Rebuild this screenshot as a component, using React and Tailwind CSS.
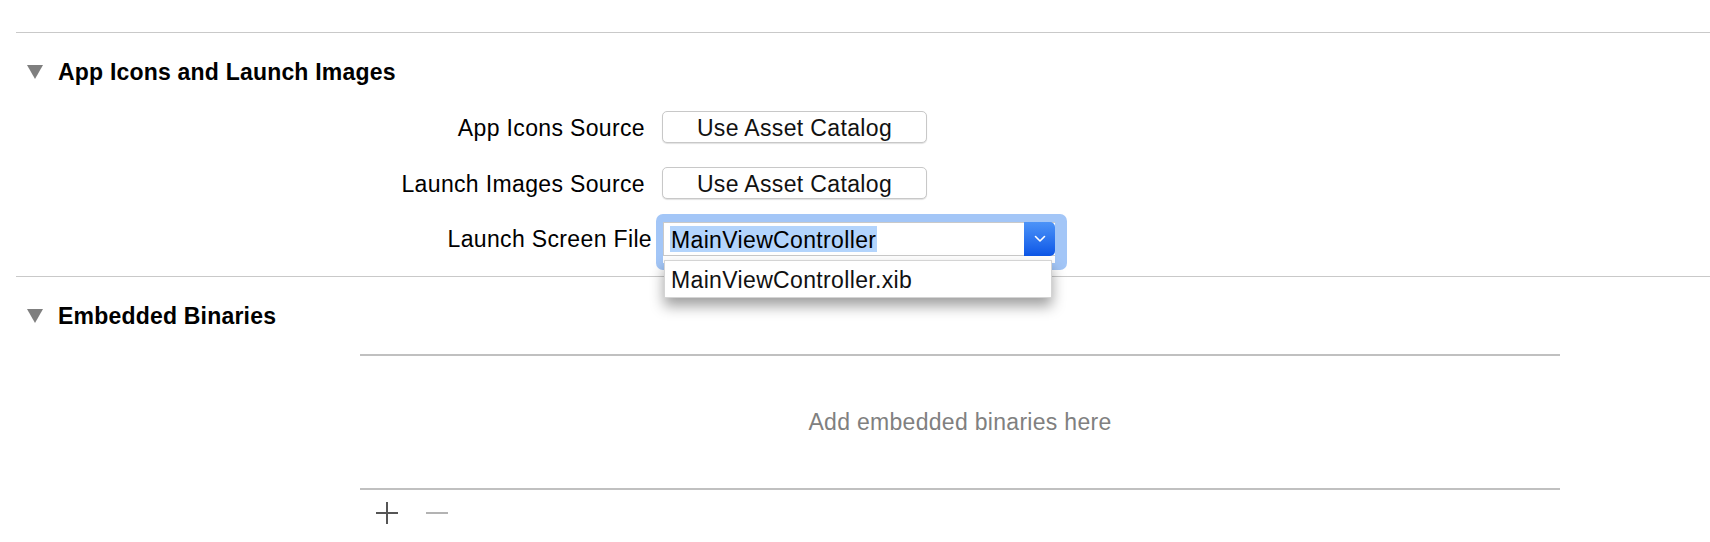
import React from "react";

function Disclosure() {
  return (
    <svg width="16" height="14" viewBox="0 0 16 14" className="shrink-0">
      <polygon points="0,0 16,0 8,14" fill="#7f7f7f" />
    </svg>
  );
}

function SectionHeader({ title }) {
  return (
    <div className="flex items-center h-[24px] mt-[27px] pl-[27px] gap-[15px]">
      <Disclosure />
      <span className="text-[23px] leading-[24px] font-bold tracking-[0.2px] text-black">{title}</span>
    </div>
  );
}

function Chevron() {
  return (
    <svg width="12" height="8" viewBox="0 0 12 8">
      <polyline points="1.5,1.5 6,6 10.5,1.5" fill="none" stroke="#ffffff" strokeWidth="1.6" strokeLinecap="round" strokeLinejoin="round" />
    </svg>
  );
}

function ButtonRow({ label, mt }) {
  return (
    <div className={`flex ${mt}`}>
      <div className="w-[645px] text-right h-[32px] leading-[34px] text-[23px] tracking-[0.35px] text-black">{label}</div>
      <div className="ml-[17px] w-[265px] h-[32px] rounded-[5px] border border-[#c8c8c8] bg-white shadow-[0_1px_1px_rgba(0,0,0,0.12)] text-center leading-[32px] text-[23px] tracking-[0.35px] text-[#111]">
        Use Asset Catalog
      </div>
    </div>
  );
}

export default function App() {
  return (
    <div className="w-[1710px] h-[542px] bg-white overflow-hidden" style={{ fontFamily: '"Liberation Sans", Arial, sans-serif' }}>
      <div className="h-[32px]" />
      <div className="ml-[16px] h-[1px] bg-[#c9c9c9]" />

      <SectionHeader title="App Icons and Launch Images" />

      <ButtonRow label="App Icons Source" mt="mt-[27px]" />
      <ButtonRow label="Launch Images Source" mt="mt-[24px]" />

      <div className="flex mt-[15px]">
        <div className="w-[652px] text-right pt-[8px] h-[34px] leading-[34px] text-[23px] tracking-[0.35px] text-black">
          Launch Screen File
        </div>
        <div className="relative ml-[4px] w-[411px] h-[56px] rounded-[7px] bg-[#a3c6f7] pt-[8px] pl-[7px] pr-[12px] pb-[7px] z-10">
          <div className="bg-white h-full">
            <div className="flex h-[34px] border border-[#c9c9c9] border-r-0">
              <div className="flex-1 flex items-center pl-[6px]">
                <span className="bg-[#b3d4fc] h-[26px] leading-[28px] px-[1px] text-[23px] tracking-[0.35px] text-black">
                  MainViewController
                </span>
              </div>
              <div className="w-[31px] h-[34px] -mt-[1px] rounded-r-[5px] bg-gradient-to-b from-[#4c93f8] to-[#0c55e6] flex items-center justify-center">
                <Chevron />
              </div>
            </div>
          </div>
          <div className="absolute left-[8px] top-[46px] w-[388px] h-[38px] bg-white border border-[#d4d4d4] shadow-[0_8px_14px_rgba(0,0,0,0.38)] pl-[6px] leading-[38px] text-[23px] tracking-[0.35px] text-[#111]">
            MainViewController.xib
          </div>
        </div>
      </div>

      <div className="ml-[16px] mt-[6px] h-[1px] bg-[#c9c9c9]" />

      <SectionHeader title="Embedded Binaries" />

      <div className="ml-[360px] w-[1200px] mt-[26px]">
        <div className="h-[2px] bg-[#c0c0c0]" />
        <div className="h-[132px] flex items-center justify-center">
          <span className="text-[23px] leading-[24px] tracking-[0.3px] text-[#808080]">Add embedded binaries here</span>
        </div>
        <div className="h-[2px] bg-[#c0c0c0]" />
        <div className="flex items-center mt-[12px] pl-[16px] gap-[28px]">
          <svg width="22" height="22" viewBox="0 0 22 22">
            <line x1="11" y1="0" x2="11" y2="22" stroke="#555555" strokeWidth="2" />
            <line x1="0" y1="11" x2="22" y2="11" stroke="#555555" strokeWidth="2" />
          </svg>
          <svg width="22" height="22" viewBox="0 0 22 22">
            <line x1="0" y1="11" x2="22" y2="11" stroke="#b3b3b3" strokeWidth="2" />
          </svg>
        </div>
      </div>
    </div>
  );
}
